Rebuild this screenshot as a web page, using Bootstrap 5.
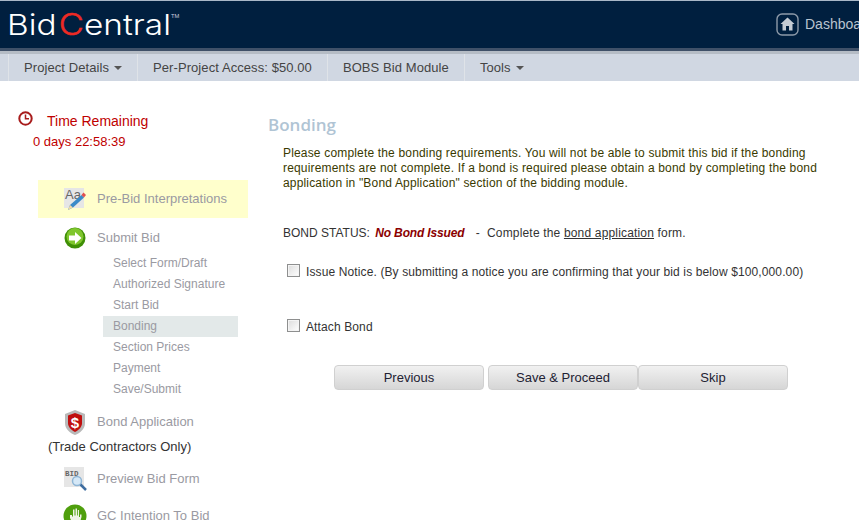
<!DOCTYPE html>
<html lang="en">
<head>
  <meta charset="UTF-8" />
  <meta name="viewport" content="width=device-width, initial-scale=1" />
  <title>BidCentral - Bonding</title>
  <link href="https://cdn.jsdelivr.net/npm/bootstrap@5.3.0/dist/css/bootstrap.min.css" rel="stylesheet" />
  <style>
    html, body { height: 520px; overflow: hidden; }
    body { font-family: "Liberation Sans", Arial, sans-serif; font-size: 12px; color: #333; background: #fff; }
    .top-bar { height: 54px; background: #001f3f; border-top: 1px solid #a9b8c8; border-bottom: 3px solid #b5bcc5; box-shadow: inset 0 -3px 0 #3f5068; overflow: hidden; }
    .logo-text { display: inline-block; font-family: Inter, sans-serif; font-weight: 300; font-size: 29px; color: #fff; margin-left: 7px; line-height: 47px; transform: scaleX(1.15); transform-origin: left center; white-space: nowrap; }
    .logo-text b { font-weight: 300; font-size: 30px; line-height: 20px; margin-left: 2px; color: #ee2a24; -webkit-text-stroke: .5px #ee2a24; }
    .logo-text sup { font-size: 5px; top: -17px; font-family: "Liberation Sans", sans-serif; font-weight: 400; color: #ccd; }
    .dash-link { font-size: 14px; color: #b9c4d0; white-space: nowrap; width: 83px; height: 47px; overflow: hidden; gap: 6px; flex: none; }
    .dash-link svg { flex: none; }
    .sub-bar { height: 27px; background: #d0d7e2; padding-left: 8px; }
    .sub-item { font-size: 13px; letter-spacing: .08px; color: #444; padding: 0 15px; line-height: 28px; border-left: 1px solid #dfe3e8; white-space: nowrap; }
    .sub-item .dropdown-toggle::after { margin-left: 5px; vertical-align: 2px; border-top-width: 4px; border-left-width: 4px; border-right-width: 4px; color: #555; }
    .side-col { width: 268px; flex: none; padding-top: 30px; }
    .timer { color: #c00000; }
    .timer-title { font-size: 14px; line-height: 20px; gap: 14px; padding-left: 18px; }
    .timer-title svg { margin-top: -6px; }
    .timer-val { font-size: 13px; padding-left: 33px; line-height: 22px; }
    .step-list { margin: 27px 0 0 38px; width: 210px; }
    .step-row { height: 39px; gap: 10px; padding-left: 25px; color: #9a9aa2; font-size: 13px; }
    .step-row svg { flex: none; width: 24px; }
    .step-row.step-hi { background: #ffffcc; height: 38px; }
    .step-row.step-bond { height: 26px; }
    .step-row.step-preview { height: 34px; }
    .sub-steps { margin: -4px 0 9px 65px; width: 135px; list-style: none; padding: 0; }
    .sub-steps li { height: 21px; line-height: 21px; padding-left: 10px; color: #9a9aa2; font-size: 12px; }
    .sub-steps .now { background: #e3e9e9; }
    .step-note { margin: 4px 0 7px 10px; color: #333; font-size: 13px; line-height: 16px; }
    .main-col { padding-top: 33px; width: 591px; }
    .page-head { font-family: "Open Sans", sans-serif; font-size: 17px; font-weight: 600; color: #b0c4d4; line-height: 22px; margin: 0 0 10px; }
    .intro { margin: 0 0 0 15px; width: 540px; line-height: 15px; color: #3a3a00; letter-spacing: .17px; }
    .status { margin: 34px 0 0 15px; line-height: 16px; color: #333; }
    .status em { color: #8b0000; font-weight: 700; margin: 0 8px 0 2px; letter-spacing: -.15px; }
    .status-rest { letter-spacing: .17px; }
    .status a { color: #333; }
    .chk-row { margin: 23px 0 0 19px; gap: 6px; line-height: 16px; white-space: nowrap; letter-spacing: .12px; }
    .chk-row input { appearance: none; width: 13px; height: 13px; margin: -3px 0 0; border: 1px solid #8e8f8f; background: linear-gradient(135deg, #dcdcdc, #fff); box-shadow: inset 0 0 0 1px #f4f4f4; }
    .chk-row.chk-low { margin-top: 39px; }
    .btn-row { margin: 30px 0 0 66px; }
    .gray-btn { width: 150px; height: 25px; padding: 0; font-size: 13px; color: #223; border: 1px solid #d0d0d0; border-radius: 4px; background: linear-gradient(#f1f1f1, #d6d6d6); }
    .gray-btn:first-child { margin-right: 4px; }
  </style>
</head>
<body>
  <div class="top-bar d-flex justify-content-between align-items-start">
    <span class="logo-text">Bid<b>C</b>entral<sup>TM</sup></span>
    <div class="dash-link d-flex align-items-center">
      <svg width="23" height="23" viewBox="0 0 23 23"><rect x="1" y="1" width="21" height="21" rx="5" fill="none" stroke="#8d9aa9" stroke-width="1.4"/><path d="M11.500 4.500 L18.500 11 H16.500 V17.500 H13 V13 H10 V17.500 H6.500 V11 H4.500 Z" fill="#c5ccd4"/></svg>
      <span>Dashboard</span>
    </div>
  </div>
  <div class="sub-bar d-flex">
    <div class="sub-item"><span class="dropdown-toggle">Project Details</span></div>
    <div class="sub-item">Per-Project Access: $50.00</div>
    <div class="sub-item">BOBS Bid Module</div>
    <div class="sub-item"><span class="dropdown-toggle">Tools</span></div>
  </div>
  <div class="d-flex">
    <div class="side-col">
      <div class="timer timer-title d-flex align-items-center">
        <svg width="15" height="15" viewBox="0 0 15 15"><circle cx="7.500" cy="7.500" r="6.200" fill="none" stroke="#a81c1c" stroke-width="2"/><path d="M7.500 3.500V7.800H11" fill="none" stroke="#a81c1c" stroke-width="1.500"/></svg>
        <span>Time Remaining</span>
      </div>
      <div class="timer timer-val">0 days 22:58:39</div>
      <div class="step-list">
        <div class="step-row step-hi d-flex align-items-center">
          <svg width="24" height="24" viewBox="0 0 24 24"><rect x="1" y="1" width="20" height="20" fill="#e6e6e6"/><text x="2" y="12" font-family="Liberation Sans" font-size="13" fill="#666">Aa</text><path d="M5 23 L7 18 L18.500 8 L21 10.500 L10 20.500 Z" fill="#3a8ac8"/><path d="M5 23 L7 18 L10 20.500Z" fill="#f0d8a8"/><path d="M18.500 8 L20.500 5.500 L23 8 L21 10.500Z" fill="#e05050"/></svg>
          <span>Pre-Bid Interpretations</span>
        </div>
        <div class="step-row d-flex align-items-center">
          <svg width="24" height="22" viewBox="0 0 24 22"><circle cx="12" cy="11" r="10.500" fill="#3f8f06"/><circle cx="12" cy="9.500" r="8.500" fill="#7fc62d"/><path d="M6 8.500H12V5L18.500 11 12 17V13.500H6Z" fill="#fff"/></svg>
          <span>Submit Bid</span>
        </div>
        <ul class="sub-steps">
          <li>Select Form/Draft</li>
          <li>Authorized Signature</li>
          <li>Start Bid</li>
          <li class="now">Bonding</li>
          <li>Section Prices</li>
          <li>Payment</li>
          <li>Save/Submit</li>
        </ul>
        <div class="step-row step-bond d-flex align-items-center">
          <svg width="24" height="25" viewBox="0 0 24 25"><path d="M12 0 L22 4 V13 C22 19 17 23 12 25 C7 23 2 19 2 13 V4Z" fill="#b9b9b9"/><path d="M12 3 L19 5.500 V13 C19 17 16 20 12 22 C8 20 5 17 5 13 V5.500Z" fill="#c00f0f"/><text x="12" y="17.500" text-anchor="middle" font-family="Liberation Sans" font-size="15" font-weight="700" fill="#fff">$</text></svg>
          <span>Bond Application</span>
        </div>
        <div class="step-note">(Trade Contractors Only)</div>
        <div class="step-row step-preview d-flex align-items-center">
          <svg width="24" height="24" viewBox="0 0 24 24"><rect x="1" width="20" height="20" fill="#e6e6e6"/><text x="2" y="9" font-family="Liberation Mono" font-size="7.500" font-weight="700" fill="#666">BID</text><circle cx="14" cy="14" r="4.500" fill="#d5e8f7" stroke="#8fb6d6" stroke-width="1.500"/><path d="M17.500 17.500 L23 23" stroke="#3f6ea0" stroke-width="2.500"/></svg>
          <span>Preview Bid Form</span>
        </div>
        <div class="step-row d-flex align-items-center">
          <svg width="24" height="24" viewBox="0 0 24 24"><circle cx="12" cy="12" r="11.500" fill="#4f9f0d"/><path d="M7 11V14L10 20H16.500L18.500 13V10.500H17V13H16V6H14.800V11.500H14V4.500H12.500V11.500H11.500V5.500H10V12.500H9V11Z" fill="#eef3e6"/></svg>
          <span>GC Intention To Bid</span>
        </div>
      </div>
    </div>
    <div class="main-col">
      <h1 class="page-head">Bonding</h1>
      <p class="intro">Please complete the bonding requirements. You will not be able to submit this bid if the bonding requirements are not complete. If a bond is required please obtain a bond by completing the bond application in "Bond Application" section of the bidding module.</p>
      <div class="status">BOND STATUS: <em>No Bond Issued</em> <span class="status-rest">- &nbsp;Complete the <a href="#">bond application</a> form.</span></div>
      <label class="chk-row d-flex align-items-center"><input type="checkbox" /> <span>Issue Notice. (By submitting a notice you are confirming that your bid is below $100,000.00)</span></label>
      <label class="chk-row chk-low d-flex align-items-center"><input type="checkbox" /> <span>Attach Bond</span></label>
      <div class="btn-row d-flex">
        <button class="btn gray-btn">Previous</button>
        <button class="btn gray-btn">Save &amp; Proceed</button>
        <button class="btn gray-btn">Skip</button>
      </div>
    </div>
  </div>
  <script src="https://cdn.jsdelivr.net/npm/bootstrap@5.3.0/dist/js/bootstrap.bundle.min.js"></script>
</body>
</html>
